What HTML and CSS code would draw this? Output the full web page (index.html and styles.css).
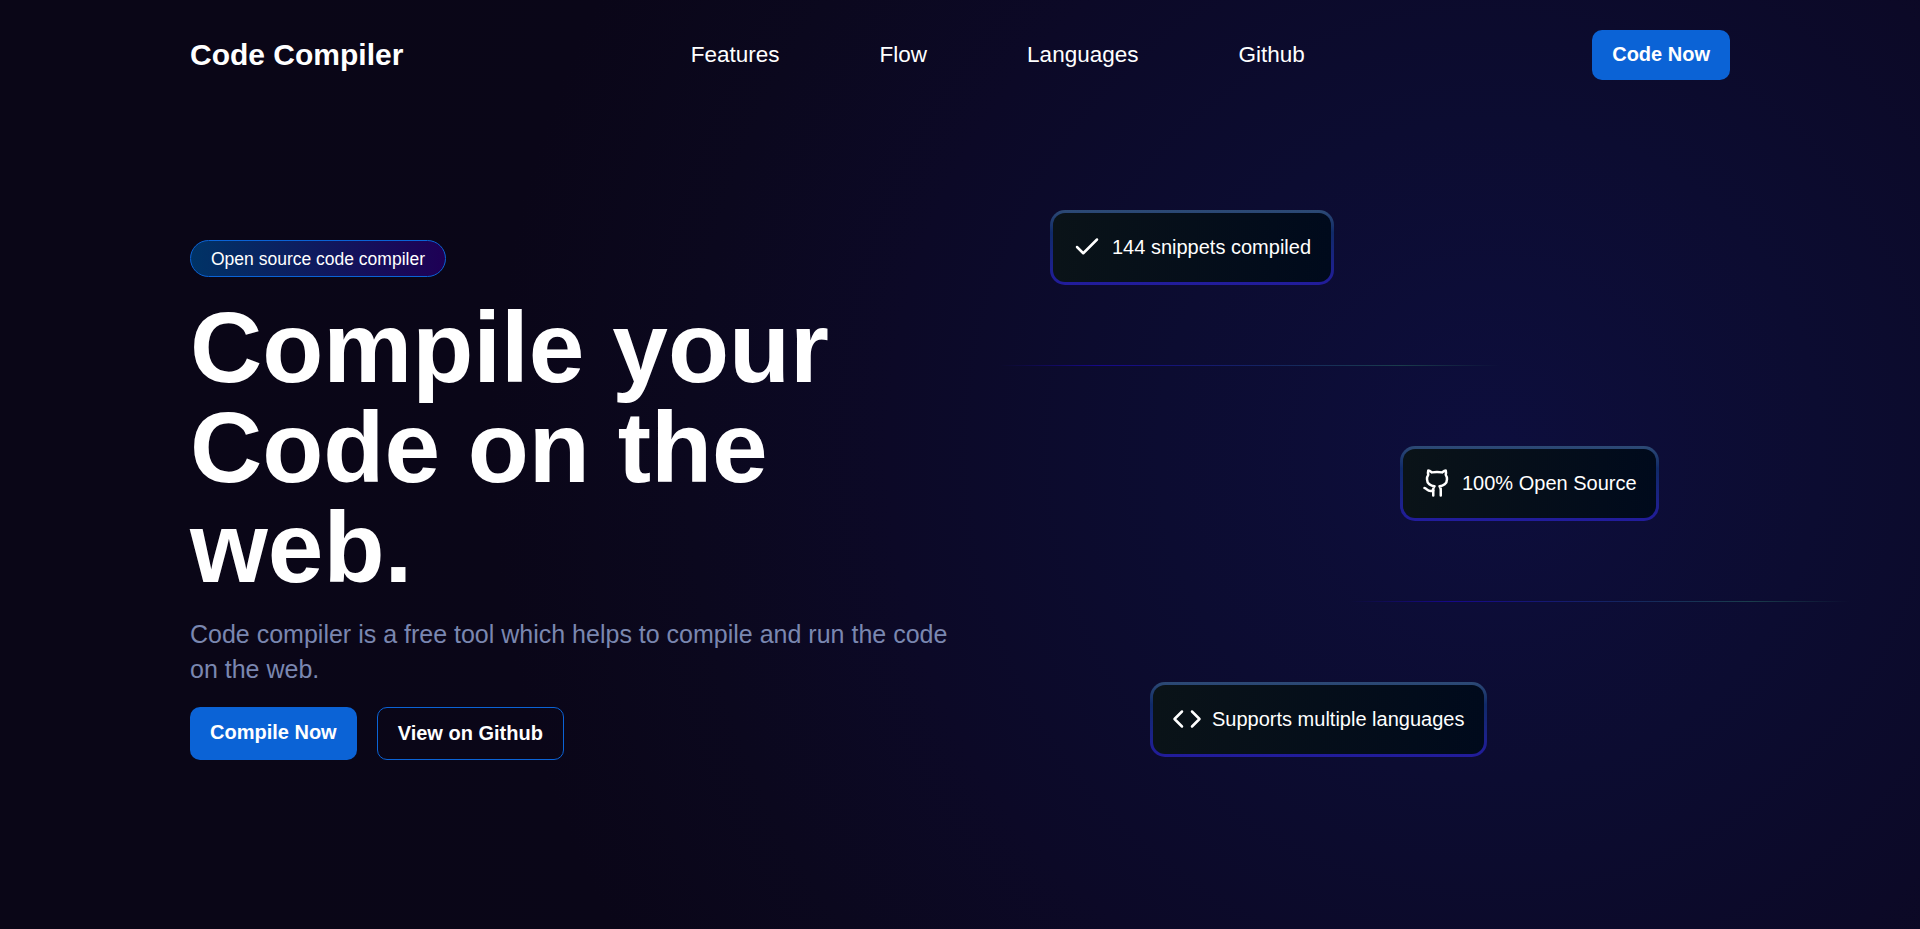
FILE: index.html
```html
<!DOCTYPE html>
<html lang="en">
<head>
<meta charset="utf-8">
<title>Code Compiler</title>
<link rel="stylesheet" href="styles.css">
</head>
<body>
<div class="page">
  <header class="nav">
    <div class="logo">Code Compiler</div>
    <nav class="links"><a>Features</a><a>Flow</a><a>Languages</a><a>Github</a></nav>
    <a class="btn btn-nav">Code Now</a>
  </header>
  <main class="hero">
    <section class="intro">
      <span class="badge">Open source code compiler</span>
      <h1 class="title">Compile your Code on the web.</h1>
      <p class="lead">Code compiler is a free tool which helps to compile and run the code on the web.</p>
      <div class="actions">
        <a class="btn btn-main">Compile Now</a>
        <a class="btn btn-outline">View on Github</a>
      </div>
    </section>
    <section class="flow">
      <div class="card card-first">
        <svg class="icon" viewBox="0 0 24 24"><path d="M20 6 9 17l-5-5"/></svg>
        <span>144 snippets compiled</span>
      </div>
      <div class="line"></div>
      <div class="card card-second">
        <svg class="icon" viewBox="0 0 24 24"><path d="M15 22v-4a4.8 4.8 0 0 0-1-3.5c3 0 6-2 6-5.5.08-1.25-.27-2.48-1-3.5.28-1.15.28-2.35 0-3.5 0 0-1 0-3 1.5-2.64-.5-5.36-.5-8 0C6 2 5 2 5 2c-.3 1.15-.3 2.35 0 3.5A5.403 5.403 0 0 0 4 9c0 3.5 3 5.5 6 5.5-.39.49-.68 1.05-.85 1.65-.17.6-.22 1.23-.15 1.85v4"/><path d="M9 18c-4.51 2-5-2-7-2"/></svg>
        <span>100% Open Source</span>
      </div>
      <div class="line line-right"></div>
      <div class="card card-third">
        <svg class="icon" viewBox="0 0 24 24"><path d="m16 18 6-6-6-6M8 6l-6 6 6 6"/></svg>
        <span>Supports multiple languages</span>
      </div>
    </section>
  </main>
</div>
</body>
</html>
```
FILE: styles.css
```css
* { box-sizing: border-box; }

body {
  margin: 0;
  color: #fff;
  background: #0a0617;
  font-family: "Liberation Sans", Arial, sans-serif;
}

.page {
  height: 929px;
  padding: 0 190px;
  overflow: hidden;
  background: radial-gradient(circle at 1490px 450px, #0d0e3d 0, #0c0c31 330px, #0c0927 600px, #0b081e 800px, #0a0618 1000px, #0a0617 1300px);
}

.nav {
  display: flex;
  justify-content: space-between;
  align-items: center;
  height: 110px;
}

.logo { font-size: 30px; font-weight: 700; }

.links { display: flex; gap: 100px; font-size: 22.5px; }

.btn {
  border-radius: 10px;
  font-size: 20px;
  font-weight: 700;
  line-height: 23px;
  white-space: nowrap;
}

.btn-nav { padding: 13px 20px 14px; background: #0b63d6; }

.hero { display: flex; }

.intro { flex: none; width: 810px; padding-top: 130px; }

.badge {
  display: block;
  width: fit-content;
  height: 37px;
  padding: 0 20px;
  border: 1px solid #0b63d6;
  border-radius: 20px;
  background: linear-gradient(90deg, #003366, #1e0055);
  font-size: 17.5px;
  line-height: 36px;
}

.title {
  width: 700px;
  margin: 20px 0 0;
  font-size: 100px;
  line-height: 100px;
}

.lead {
  width: 770px;
  margin: 20px 0 0;
  color: #7a87b0;
  font-size: 25px;
  line-height: 35px;
}

.actions { display: flex; gap: 20px; margin-top: 20px; }

.btn-main { height: 53px; padding: 14px 20px; background: #0b63d6; }

.btn-outline { height: 53px; padding: 14px 20px; border: 1px solid #0b63d6; }

.flow { width: 860px; flex: none; padding-top: 99.5px; }

.card {
  display: flex;
  align-items: center;
  gap: 10px;
  width: fit-content;
  height: 75.2px;
  padding: 0 19.5px 0 19px;
  border: 3px solid transparent;
  border-radius: 15px;
  background:
    linear-gradient(90deg, #0a1318, #000a1c) padding-box,
    linear-gradient(to bottom, #2d4a75, #102a68 30%, #221c9c) border-box;
  font-size: 20px;
  white-space: nowrap;
}

.card-first { margin-left: 50px; }
.card-second { margin-left: 400px; }
.card-third { margin-left: 150px; }

.icon {
  width: 30px;
  height: 30px;
  fill: none;
  stroke: #fff;
  stroke-width: 2;
  stroke-linecap: round;
  stroke-linejoin: round;
}

.line {
  width: 500px;
  height: 1px;
  margin: 80px 0;
  background: linear-gradient(90deg, transparent, #16088a 20%, #14255f 55%, #1a3d4c 80%, transparent);
}

.line-right { margin-left: 350px; }
```
